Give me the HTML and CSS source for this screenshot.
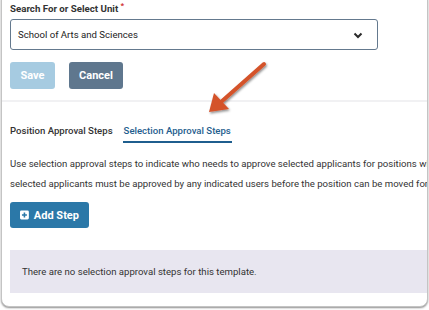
FILE: index.html
```html
<!DOCTYPE html>
<html>
<head>
  <title>Selection Approval Steps</title>
  <link rel="stylesheet" href="styles.css">
</head>
<body>

  <div class="card">
    <div class="inner">
      <div class="unit-field">
        <label class="field-label">Search For or Select Unit <span class="req">*</span></label>
        <div class="select-box">
          <span>School of Arts and Sciences</span>
          <svg class="chevron" width="10" height="7" viewBox="0 0 10 7">
            <path d="M1.5 1.5 L5 5 L8.5 1.5" fill="none" stroke="#2b2b2b" stroke-width="2"/>
          </svg>
        </div>
        <div class="actions">
          <button class="btn btn-save">Save</button>
          <button class="btn btn-cancel">Cancel</button>
        </div>
      </div>

      <div class="steps">
        <div class="tabs">
          <span class="tab">Position Approval Steps</span>
          <span class="tab active">Selection Approval Steps</span>
        </div>
        <p class="help">Use selection approval steps to indicate who needs to approve selected applicants for positions which use this template. All<br>selected applicants must be approved by any indicated users before the position can be moved forward.</p>
        <button class="btn btn-add">
          <svg width="10" height="10" viewBox="0 0 10 10">
            <rect x="0" y="0" width="10" height="10" rx="1.5" fill="#fff"/>
            <path d="M5 2.2 V7.8 M2.2 5 H7.8" stroke="#2b78a8" stroke-width="1.8"/>
          </svg>
          <span>Add Step</span>
        </button>
        <div class="empty">There are no selection approval steps for this template.</div>
      </div>
    </div>
  </div>

  <!-- annotation arrow drawn over the screenshot -->
  <svg class="arrow" width="429" height="310" viewBox="0 0 429 310">
    <defs>
      <filter id="shadow" x="-20%" y="-20%" width="140%" height="140%">
        <feDropShadow dx="1" dy="1.5" stdDeviation="1.2" flood-color="#000" flood-opacity="0.45"/>
      </filter>
    </defs>
    <g filter="url(#shadow)" fill="#d4532b">
      <line x1="264" y1="64" x2="221" y2="102" stroke="#d4532b" stroke-width="4" stroke-linecap="round"/>
      <polygon points="209,112 214,93 229,109"/>
    </g>
  </svg>

</body>
</html>
```

FILE: styles.css
```css
body {
  margin: 0;
  background-color: #fff;
  font-family: Roboto, "Liberation Sans", sans-serif;
  color: #333;
  height: 310px;
  overflow: hidden;
}

.card {
  margin: -8px 1px 0 1px;
  height: 313px;
  border: 1px solid #c4c4c4;
  border-radius: 8px;
  box-shadow: 0 1px 2px rgba(0, 0, 0, 0.45);
  background-color: #fff;
  overflow: hidden;
}

.inner {
  width: 640px;
}

.unit-field {
  padding: 8px 0 11px 8px;
  border-bottom: 2px solid #f1f1f3;
}

.field-label {
  display: block;
  font-size: 9.7px;
  font-weight: 700;
  color: #333;
  line-height: 15px;
}

.req {
  color: #d0312d;
  font-size: 8px;
  vertical-align: top;
  line-height: 10px;
}

.select-box {
  margin-top: 3px;
  height: 29px;
  width: 345px;
  border: 1px solid #64798e;
  border-radius: 3px;
  display: flex;
  align-items: center;
  justify-content: space-between;
  padding: 0 14px 0 7px;
  font-size: 9.6px;
  color: #222;
}

.chevron {
  margin-top: 2px;
}

.actions {
  display: flex;
  gap: 14px;
  margin-top: 12px;
}

.btn {
  font-family: Roboto, "Liberation Sans", sans-serif;
  font-size: 11px;
  font-weight: 700;
  color: #fff;
  border: none;
  border-radius: 3px;
  height: 27px;
  padding: 0 9px;
  white-space: nowrap;
}

.btn-save {
  width: 45px;
  background-color: #a6cbe1;
}

.btn-cancel {
  width: 54px;
  background-color: #5f778e;
}

.steps {
  padding: 0 0 0 8px;
}

.tabs {
  display: flex;
  gap: 11px;
  padding-top: 21px;
  font-size: 9.6px;
  font-weight: 500;
}

.tab {
  padding-bottom: 3px;
  line-height: 15px;
}

.tab.active {
  color: #1f5e8e;
  border-bottom: 2px solid #1f5e8e;
  padding: 0 1px 3px 1px;
  margin-left: -1px;
}

.help {
  margin: 11px 0 0 0;
  font-size: 9.6px;
  line-height: 20px;
  color: #333;
  white-space: nowrap;
}

.btn-add {
  margin-top: 8px;
  height: 26px;
  width: 79px;
  display: flex;
  align-items: center;
  gap: 5px;
  padding: 0 10px;
  font-size: 11px;
  background-color: #2b78a8;
}

.empty {
  margin-top: 22px;
  height: 43px;
  background-color: #e8e6f0;
  display: flex;
  align-items: center;
  padding-left: 12px;
  font-size: 9.6px;
  color: #333;
}

.arrow {
  position: absolute;
  left: 0;
  top: 0;
  pointer-events: none;
}
```
